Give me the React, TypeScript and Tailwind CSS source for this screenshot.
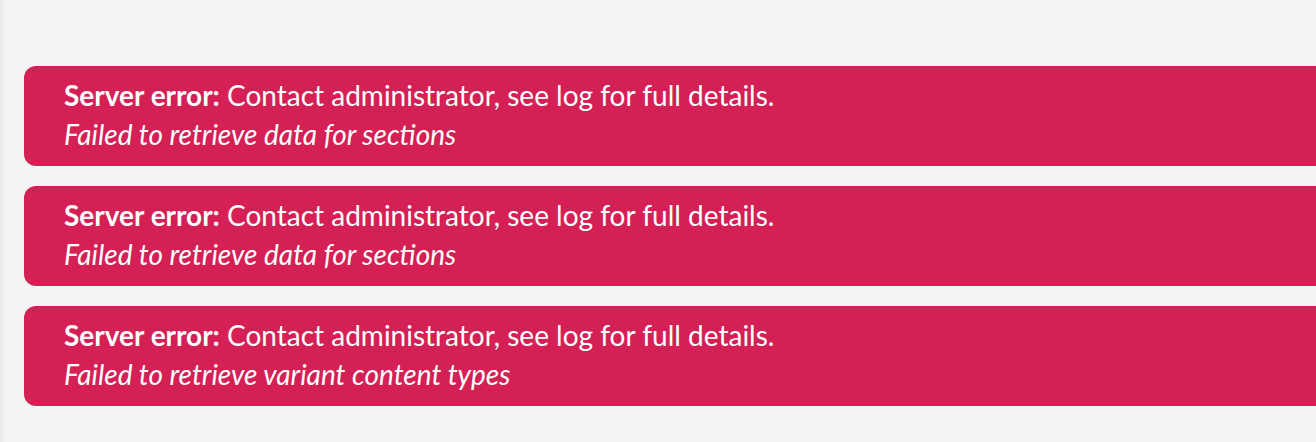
const errors = [
  "Failed to retrieve data for sections",
  "Failed to retrieve data for sections",
  "Failed to retrieve variant content types",
];

export default function App() {
  return (
    <div
      className="h-[442px] w-full overflow-hidden border-l-[3px] border-[#e9e8ea] bg-[#f5f4f5]"
      style={{ fontFamily: "Lato, 'Open Sans', sans-serif" }}
    >
      <div className="flex flex-col gap-5 pt-[66px] pl-[21px] -mr-6">
        {errors.map((msg, i) => (
          <div
            key={i}
            className="h-[100px] rounded-xl bg-[#d42054] pl-10 pt-[10px] text-[28px] leading-[39px] text-white"
          >
            <div>
              <span className="font-bold">Server error:</span> Contact
              administrator, see log for full details.
            </div>
            <div className="italic">{msg}</div>
          </div>
        ))}
      </div>
    </div>
  );
}
